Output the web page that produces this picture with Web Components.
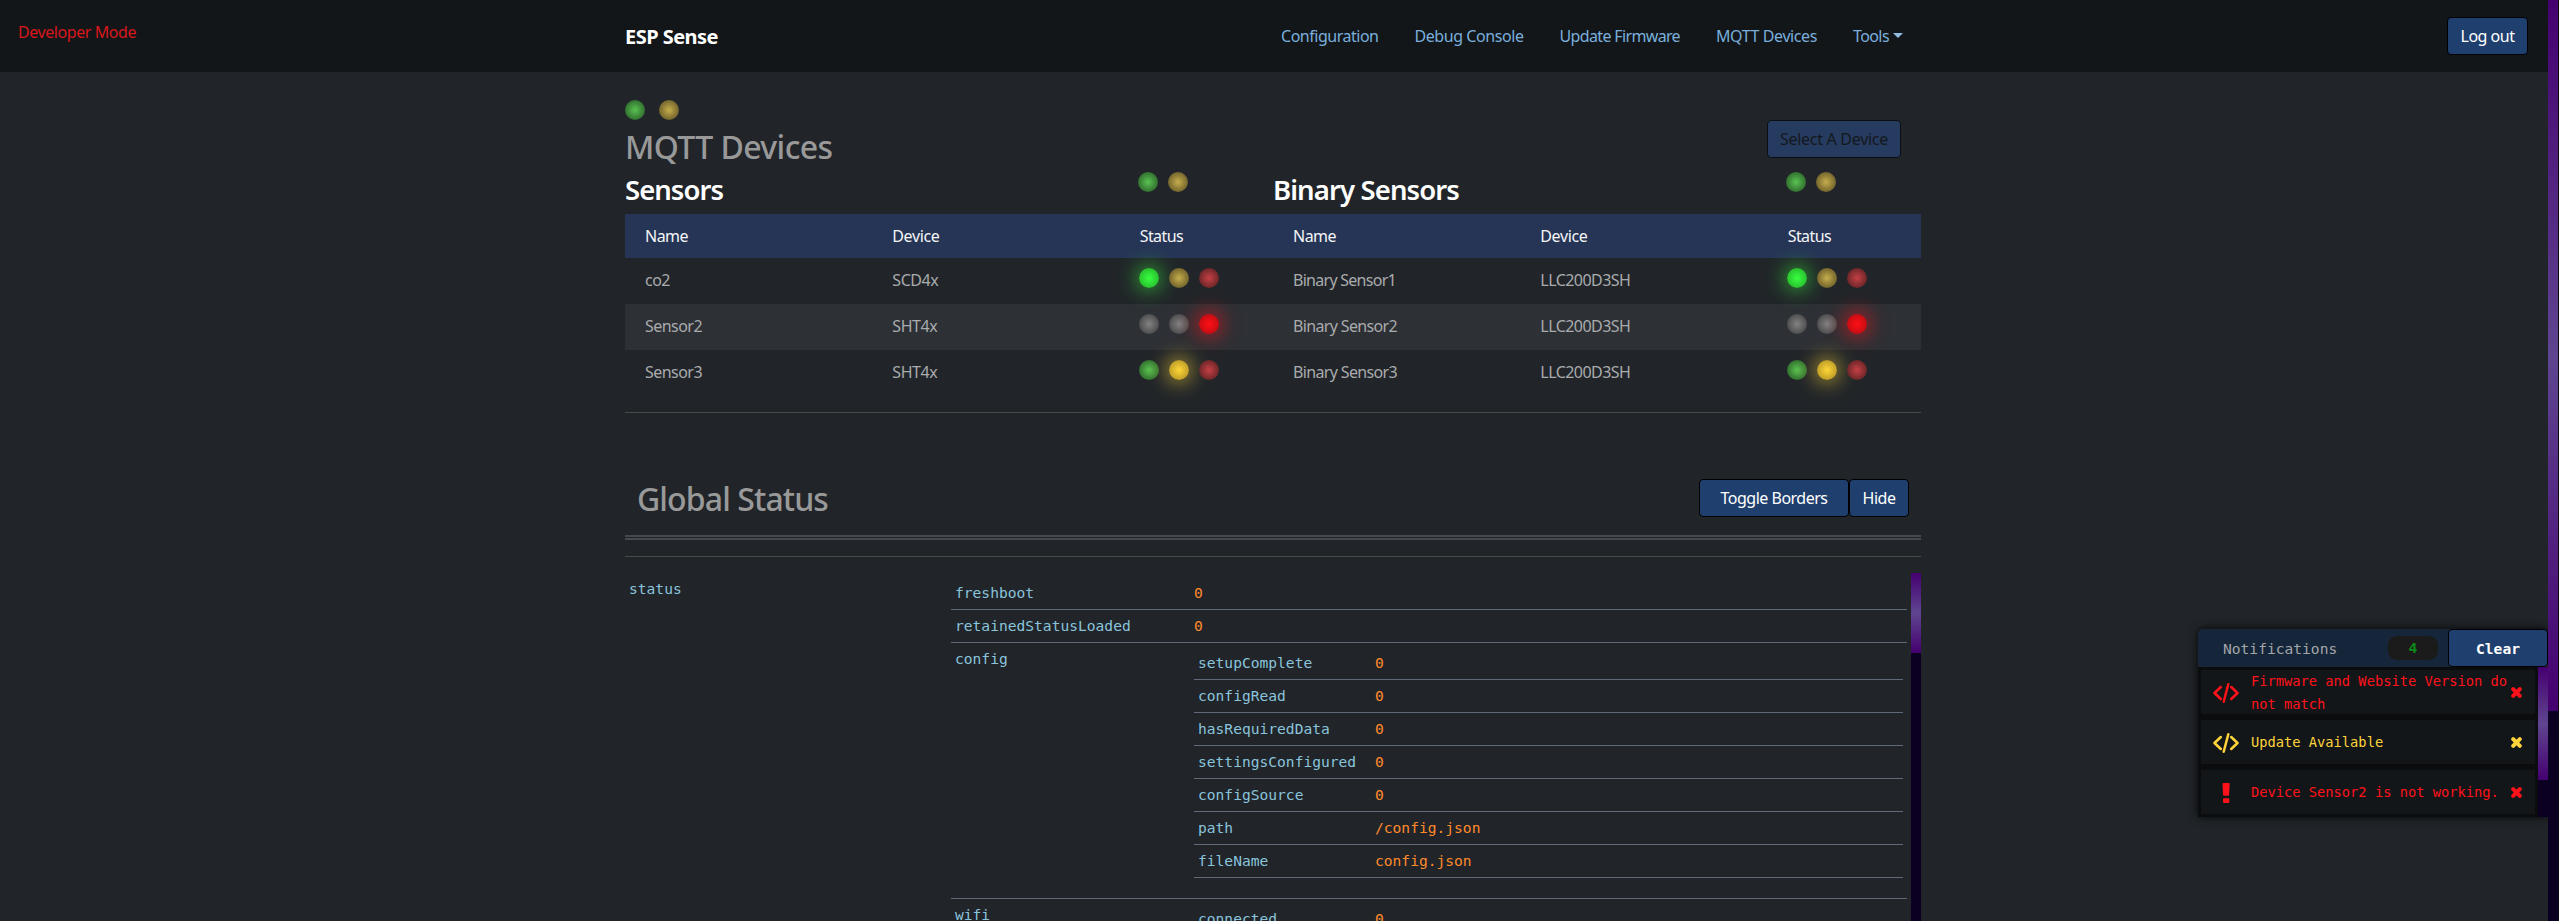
<!DOCTYPE html>
<html lang="en"><head><meta charset="utf-8"><title>ESP Sense</title>
<style>
html,body{margin:0;height:100%;overflow:hidden;background:#212529;font-family:"Noto Sans","Open Sans",sans-serif;font-size:16px;color:#a9abad}
</style></head><body>
<esp-app></esp-app>
<script>
const def=(name,html,init)=>customElements.define(name,class extends HTMLElement{
  constructor(){super();this.attachShadow({mode:'open'});}
  connectedCallback(){this.shadowRoot.innerHTML=typeof html==='function'?html(this):html;if(init)init(this);}
});

/* Text label whose tracking adapts to the width given in "w". */
def('ui-text',`<style>:host{display:inline-block;white-space:pre;flex:none}span{display:inline-block}</style><span><slot></slot></span>`,el=>{
  const w=+el.getAttribute('w');if(!w)return;
  const s=el.shadowRoot.querySelector('span');const n=el.textContent.length;
  const cur=s.getBoundingClientRect().width;
  s.style.letterSpacing=((w-cur)/n)+'px';
});

def('ui-button',`<style>:host{display:inline-flex;box-sizing:border-box;height:38px;align-items:center;justify-content:center;background:#1f3f6e;border:1px solid #000;border-radius:4px;color:#fff;flex:none}
:host([disabled]){background:#263b60;border-color:#0c0f12;color:#14181d}</style><slot></slot>`);

def('status-led',`<style>
:host{display:block;width:20px;height:20px;border-radius:50%;flex:none}
:host([c=green]){background:radial-gradient(circle,#5bc252 0%,#2f6c2d 75%)}
:host([c=yellow]){background:radial-gradient(circle,#c6ae4c 0%,#6f602b 75%)}
:host([c=red]){background:radial-gradient(circle,#c44044 0%,#692528 75%)}
:host([c=gray]){background:radial-gradient(circle,#828283 0%,#4b4b4c 75%)}
:host([c=green][on]){background:radial-gradient(circle,#38ff40 0%,#28bd2e 75%);box-shadow:0 0 20px 2px rgba(56,220,60,.75)}
:host([c=yellow][on]){background:radial-gradient(circle,#ffd637 0%,#bb9b28 75%);box-shadow:0 0 20px 2px rgba(255,214,55,.7)}
:host([c=red][on]){background:radial-gradient(circle,#ff0f16 0%,#c20d12 75%);box-shadow:0 0 20px 2px rgba(255,20,25,.75)}
</style>`);

def('scroll-bar',el=>`<style>:host{display:block;width:10px;background:#0c0022;flex:none}
div{height:${el.getAttribute('thumb')}px;background:linear-gradient(#450070,#5f4590 50%,#450070)}</style><div></div>`);

def('top-nav',`<style>
:host{display:grid;grid-template-columns:625px 1296px 1fr;height:72px;background:#121619}
.dev{padding:21px 0 0 18px;color:#d8161b;line-height:22px}
.mid{display:flex;justify-content:space-between;align-items:center;padding-right:18px}
.brand{font-weight:700;font-size:20px;color:#fff}
nav{display:flex;gap:36px;color:#7aafdc}
.drop{display:flex;align-items:center;gap:4px}
.drop i{border:5px solid transparent;border-top-color:#8fbce0;border-bottom:0;margin-bottom:1px}
.end{display:flex;justify-content:flex-end;align-items:center;padding-right:20px}
</style>
<div class="dev"><ui-text w="118">Developer Mode</ui-text></div>
<div class="mid"><ui-text class="brand" w="93">ESP Sense</ui-text>
<nav><ui-text w="97.500">Configuration</ui-text><ui-text w="109">Debug Console</ui-text><ui-text w="120.500">Update Firmware</ui-text><ui-text w="101">MQTT Devices</ui-text><span class="drop"><ui-text w="36">Tools</ui-text><i></i></span></nav></div>
<div class="end"><ui-button style="width:81px"><ui-text w="54">Log out</ui-text></ui-button></div>`);

def('sensor-table',el=>{
  const rows=JSON.parse(el.getAttribute('rows'));
  return `<style>
:host{display:block;width:648px}
.cap{display:grid;grid-template-columns:513px 1fr;height:44px}
h3{margin:0;font-size:27.5px;font-weight:600;color:#fff;line-height:40px}
.leds{display:flex;gap:10px}
.cap .leds{padding-top:2px}
.row{display:grid;grid-template-columns:247.33px 247.33px 1fr;height:46px;line-height:45px;padding-left:20px}
.head{background:#263556;color:#f4f5f7;height:44px;line-height:45px}
.row.alt{background:#2d3035}
.row .leds{padding-top:10px;margin-left:-1px}
</style>
<div class="cap"><h3><ui-text w="${el.getAttribute('tw')}">${el.getAttribute('title')}</ui-text></h3><div class="leds"><status-led c="green"></status-led><status-led c="yellow"></status-led></div></div>
<div class="row head"><ui-text w="43">Name</ui-text><ui-text w="47">Device</ui-text><ui-text w="43.500">Status</ui-text></div>
${rows.map((r,i)=>`<div class="row ${i%2?'alt':''}"><ui-text w="${r[1]}">${r[0]}</ui-text><ui-text w="${r[3]}">${r[2]}</ui-text><div class="leds">${['<status-led c="green" on></status-led><status-led c="yellow"></status-led><status-led c="red"></status-led>','<status-led c="gray"></status-led><status-led c="gray"></status-led><status-led c="red" on></status-led>','<status-led c="green"></status-led><status-led c="yellow" on></status-led><status-led c="red"></status-led>'][i]}</div></div>`).join('')}`;
});

def('mqtt-panel',`<style>
:host{display:block;padding-top:28px;height:312px;border-bottom:1px solid #44494a}
.leds{display:flex;gap:14px}
.title{display:flex;justify-content:space-between;height:50px;padding-right:20px}
h2{margin:0;font-size:32px;font-weight:500;color:#999;line-height:53px}
.tables{display:flex}
</style>
<div class="leds"><status-led c="green"></status-led><status-led c="yellow"></status-led></div>
<div class="title"><h2><ui-text w="207.500">MQTT Devices</ui-text></h2><ui-button disabled style="width:134px"><ui-text w="108">Select A Device</ui-text></ui-button></div>
<div class="tables"><sensor-table title="Sensors" tw="98" rows='[["co2",25,"SCD4x",46],["Sensor2",57,"SHT4x",45],["Sensor3",57,"SHT4x",45]]'></sensor-table>
<sensor-table title="Binary Sensors" tw="186" rows='[["Binary Sensor1",103,"LLC200D3SH",90],["Binary Sensor2",104,"LLC200D3SH",90],["Binary Sensor3",104,"LLC200D3SH",90]]'></sensor-table></div>`);

def('kv-row',el=>`<style>
:host{display:grid;grid-template-columns:${el.getAttribute('k')}px 1fr;border-bottom:1px solid #5f697a;line-height:24px}
:host([plain]){border:0}
div{padding:4px}.key{color:#8ac4dc}.val{color:#ff8a2b}
</style><div class="key">${el.getAttribute('name')}</div><div class="val"><slot></slot></div>`);
def('kv-table',`<style>:host{display:block}:host([gap]){margin-bottom:16px}</style><slot></slot>`);

def('global-status',`<style>
:host{display:block}
header{display:flex;justify-content:space-between;height:122px;border-bottom:5px double #464a4e;box-sizing:content-box}
h2{margin:0;font-size:32px;font-weight:500;color:#999;line-height:44px;padding:64px 0 0 12px}
.b{display:flex;padding:66px 12px 0 0}
hr{border:0;height:1px;background:#44494a;margin:16px 0}
.view{display:flex;height:348px;overflow:hidden;font:14.6px "DejaVu Sans Mono",monospace}
.main{flex:1}
</style>
<header><h2><ui-text w="191">Global Status</ui-text></h2><div class="b"><ui-button style="width:150px"><ui-text w="107">Toggle Borders</ui-text></ui-button><ui-button style="width:60px"><ui-text w="33">Hide</ui-text></ui-button></div></header>
<hr>
<div class="view"><div class="main"><kv-row plain k="322" name="status"><kv-table>
<kv-row k="239" name="freshboot">0</kv-row><kv-row k="239" name="retainedStatusLoaded">0</kv-row>
<kv-row k="239" name="config"><kv-table gap>
<kv-row k="177" name="setupComplete">0</kv-row><kv-row k="177" name="configRead">0</kv-row><kv-row k="177" name="hasRequiredData">0</kv-row><kv-row k="177" name="settingsConfigured">0</kv-row><kv-row k="177" name="configSource">0</kv-row><kv-row k="177" name="path">/config.json</kv-row><kv-row k="177" name="fileName">config.json</kv-row></kv-table></kv-row>
<kv-row k="239" name="wifi"><kv-table gap><kv-row k="177" name="connected">0</kv-row></kv-table></kv-row>
</kv-table></kv-row></div><scroll-bar thumb="80"></scroll-bar></div>`);

const icons={
 code:'<svg width="26" height="20" viewBox="0 0 26 20" fill="none" stroke="currentColor" stroke-width="2.500" stroke-linecap="round" stroke-linejoin="round"><path d="M7.800 4 1.500 10l6.300 6M18.200 4 24.500 10l-6.300 6M15.300 1.300 10.700 18.700"/></svg>',
 bang:'<svg width="26" height="20" viewBox="0 0 26 20" fill="currentColor"><path d="M9.500 1q0-1 1-1h5.200q1 0 1 1l-.6 11q0 .8-.9.8h-4.200q-.9 0-.9-.8zM10.200 15.200h5.600q.5 0 .5.500v3.600q0 .6-.6.6h-5q-.6 0-.6-.6v-3.600z"/></svg>'};
def('note-item',el=>`<style>
:host{display:flex;align-items:center;height:44px;background:#121619;padding:0 13px 0 12px;line-height:23px;font-size:13.73px;color:#ff1219}
:host([warn]){color:#ffd43b}
.ic{width:38px;height:20px;margin-top:1px}.ic svg,.x{display:block}
.t{flex:1;white-space:nowrap;padding-top:1px}.x{margin-top:1px}
</style><div class="ic">${icons[el.getAttribute('icon')]}</div><div class="t"><slot></slot></div>
<svg class="x" width="11" height="11" viewBox="0 0 11 11"><path d="M2.200 2.200l6.600 6.600M8.800 2.200l-6.600 6.600" stroke="currentColor" stroke-width="4" stroke-linecap="round"/></svg>`);

def('notification-box',`<style>
:host{position:absolute;left:2198px;top:629px;width:350px;display:block;font:14.6px "DejaVu Sans Mono",monospace;box-shadow:0 0 10px rgba(0,0,0,.9);border-radius:5px 5px 0 0;clip-path:inset(-20px 0 -20px -20px)}
.h{display:flex;height:38px;background:#16263a;border-radius:5px;align-items:center}
.n{padding-left:25px;width:165px;color:#a3a5a8}
.badge{width:50px;height:24px;line-height:24px;border-radius:9px;background:#1b1b1b;color:#0d8a1c;font-weight:700;text-align:center;margin-right:10px}
.h ui-button{font-weight:700}
.body{display:flex;height:150px}
.list{flex:1;background:#0b0c0e;padding:3px;display:flex;flex-direction:column;gap:6px}
</style>
<div class="h"><span class="n">Notifications</span><span class="badge">4</span><ui-button style="width:100px">Clear</ui-button></div>
<div class="body"><div class="list"><note-item icon="code">Firmware and Website Version do<br>not match</note-item><note-item warn icon="code">Update Available</note-item><note-item icon="bang">Device Sensor2 is not working.</note-item></div><scroll-bar thumb="113"></scroll-bar></div>`);

def('esp-app',`<style>
:host{display:grid;grid-template-columns:2548px 10px 1px;height:921px;overflow:hidden}
.page{min-width:0;height:921px;overflow:hidden}
main{width:1296px;margin-left:625px}
.edge{background:#0a0a0a}
</style>
<div class="page"><top-nav></top-nav><main><mqtt-panel></mqtt-panel><global-status></global-status></main></div>
<scroll-bar thumb="711"></scroll-bar><div class="edge"></div>
<notification-box></notification-box>`);
</script></body></html>
